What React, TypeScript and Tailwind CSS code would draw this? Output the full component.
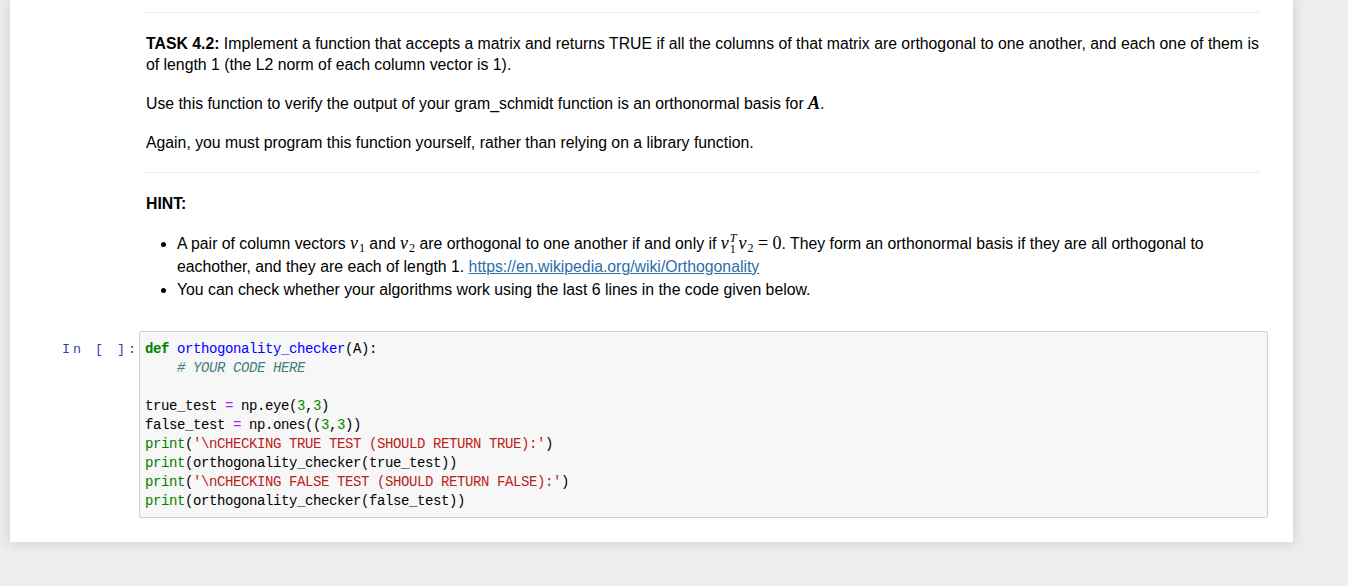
const sans = { fontFamily: '"Liberation Sans", Arial, sans-serif' };

const V = ({ sub, sup }: { sub: string; sup?: string }) => (
  <span className="font-['Liberation_Serif',serif] text-[18px] leading-none whitespace-nowrap">
    <i>v</i>
    {sup ? (
      <span className="inline-flex flex-col align-[7px] text-[12px] leading-[11px] ml-[1px] mr-[2px]">
        <i>{sup}</i>
        <span>{sub}</span>
      </span>
    ) : (
      <span className="text-[12px] align-[-3px] ml-[1px]">{sub}</span>
    )}
  </span>
);

const K = ({ c, children }: { c: string; children: React.ReactNode }) => <span className={c}>{children}</span>;

export default function App() {
  return (
    <div className="min-h-screen bg-[#eeeeee] text-black" style={sans}>
      <div className="ml-[10px] w-[1283px] bg-white shadow-[0_0_12px_1px_rgba(87,87,87,0.2)] pb-[24px]">
        {/* markdown cell */}
        <div className="pl-[135px] pr-[32px] pt-[12px] text-[15.8px] leading-[21px]">
          <div className="h-px bg-[#eeeeee]" />
          <p className="mt-[20px] pl-px">
            <b>TASK 4.2:</b> Implement a function that accepts a matrix and returns TRUE if all the columns of that
            matrix are orthogonal to one another, and each one of them is of length 1 (the L2 norm of each column
            vector is 1).
          </p>
          <p className="mt-[18px] pl-px">
            Use this function to verify the output of your gram_schmidt function is an orthonormal basis for{" "}
            <b className="font-['Liberation_Serif',serif] italic text-[18px]">A</b>.
          </p>
          <p className="mt-[18px] pl-px">
            Again, you must program this function yourself, rather than relying on a library function.
          </p>
          <div className="h-px bg-[#eeeeee] mt-[19px]" />
          <p className="mt-[20px] pl-px font-bold">HINT:</p>
          <ul className="mt-[18px] pl-[32px] list-disc">
            <li className="leading-[23px]">
              A pair of column vectors <V sub="1" /> and <V sub="2" /> are orthogonal to one another if and only if{" "}
              <V sub="1" sup="T" />
              <V sub="2" />
              <span className="font-['Liberation_Serif',serif] text-[18px]"> = 0</span>. They form an orthonormal
              basis if they are all orthogonal to eachother, and they are each of length 1.{" "}
              <a className="text-[#296eaa] underline" href="#">
                https://en.wikipedia.org/wiki/Orthogonality
              </a>
            </li>
            <li className="leading-[23px]">
              You can check whether your algorithms work using the last 6 lines in the code given below.
            </li>
          </ul>
        </div>

        {/* code cell */}
        <div className="flex mt-[30px] pr-[25px]">
          <div className="w-[129px] shrink-0 pt-[9px] text-right font-['Liberation_Mono',monospace] text-[13.33px] leading-[19px] tracking-[3px] text-[#303f9f] whitespace-pre">
            {"In [ ]:"}
          </div>
          <pre className="flex-1 bg-[#f7f7f7] border border-[#cfcfcf] rounded-[2px] px-[5px] pt-[8px] pb-[6px] font-['Liberation_Mono',monospace] text-[14px] tracking-[-0.4px] leading-[19px] text-black">
            <K c="text-[#008000] font-bold">def</K> <K c="text-[#0000ff]">orthogonality_checker</K>(A):{"\n"}
            {"    "}
            <K c="text-[#408080] italic"># YOUR CODE HERE</K>
            {"\n\n"}
            true_test <K c="text-[#aa22ff]">=</K> np.eye(<K c="text-[#008800]">3</K>,<K c="text-[#008800]">3</K>){"\n"}
            false_test <K c="text-[#aa22ff]">=</K> np.ones((<K c="text-[#008800]">3</K>,<K c="text-[#008800]">3</K>)){"\n"}
            <K c="text-[#008000]">print</K>(<K c="text-[#ba2121]">'\nCHECKING TRUE TEST (SHOULD RETURN TRUE):'</K>){"\n"}
            <K c="text-[#008000]">print</K>(orthogonality_checker(true_test)){"\n"}
            <K c="text-[#008000]">print</K>(<K c="text-[#ba2121]">'\nCHECKING FALSE TEST (SHOULD RETURN FALSE):'</K>){"\n"}
            <K c="text-[#008000]">print</K>(orthogonality_checker(false_test))
          </pre>
        </div>
      </div>
    </div>
  );
}
